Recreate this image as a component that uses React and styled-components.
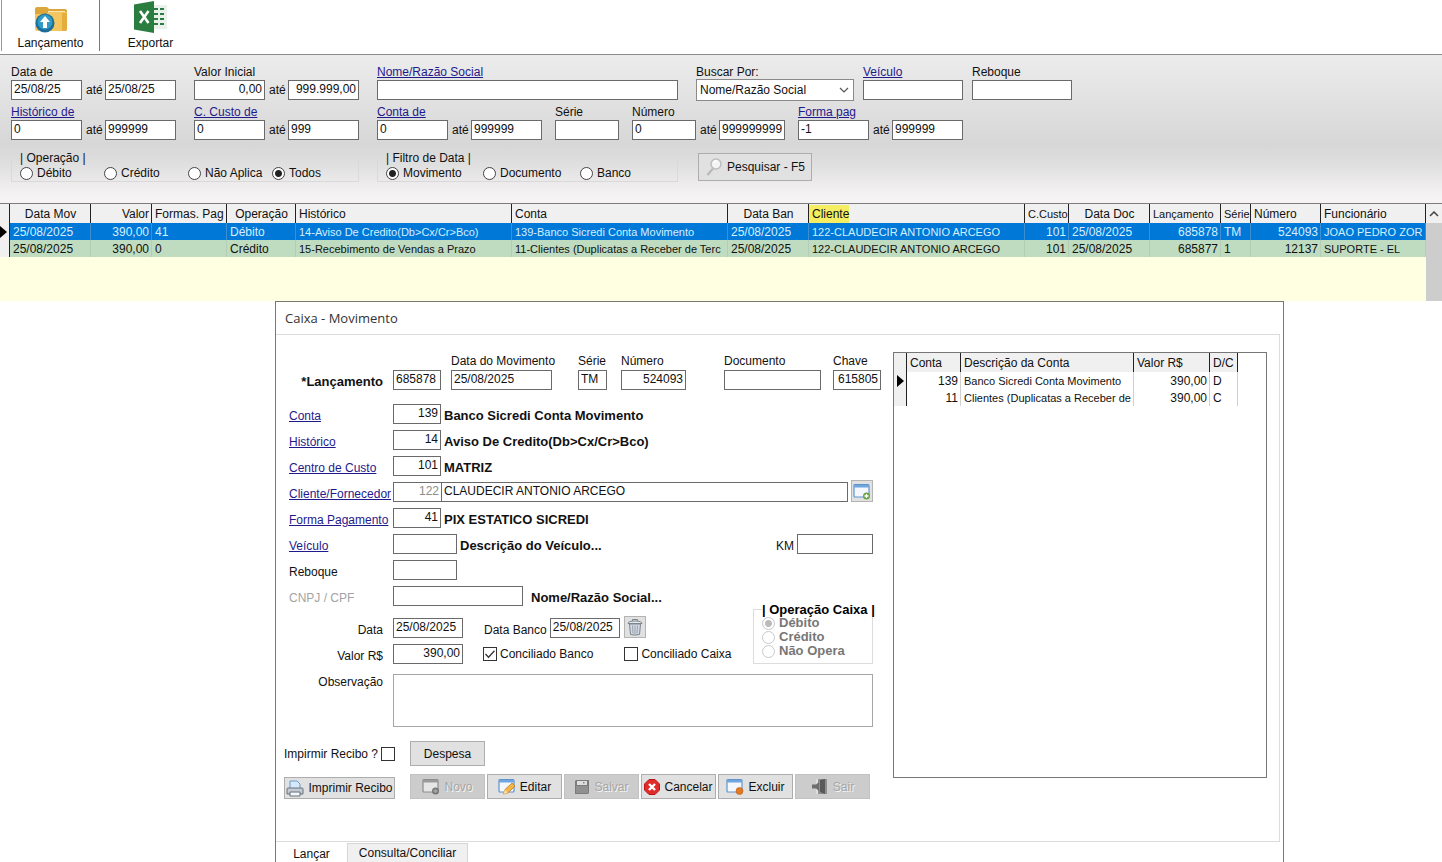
import React, { useId } from "react";
import styled, { createGlobalStyle, css } from "styled-components";

const GlobalStyle = createGlobalStyle`
  * {
    box-sizing: border-box;
  }
  body {
    margin: 0;
    background: #fff;
  }
  body, input, button, select, textarea {
    font-family: "Liberation Sans", Arial, sans-serif;
    font-size: 12px;
    line-height: 16px;
    color: #111;
  }
  a {
    color: #1f1a8c;
    white-space: nowrap;
  }
`;

/* ---------- shared controls ---------- */

const Page = styled.div`
  display: flex;
  flex-direction: column;
  height: 100vh;
  overflow: hidden;
`;

const TextInput = styled.input`
  width: ${({ $w }) => ($w ? `${$w}px` : "100%")};
  height: 20px;
  flex: none;
  padding: 0 2px 2px;
  border: 1px solid #6a6a6a;
  border-radius: 0;
  background: #fff;
  text-align: ${({ $right }) => ($right ? "right" : "left")};
  outline: none;
  &:disabled {
    color: #8c8c8c;
  }
`;

const Radio = styled.input.attrs({ type: "radio" })`
  appearance: none;
  width: 13px;
  height: 13px;
  flex: none;
  margin: 0;
  border: 1px solid #444;
  border-radius: 50%;
  background: #fff;
  &:checked {
    background: radial-gradient(circle, #222 0 3px, #fff 4px);
  }
  &:disabled {
    border-color: #c8c8c8;
  }
  &:disabled:checked {
    background: radial-gradient(circle, #bbb 0 3px, #fff 4px);
  }
`;

const CheckBox = styled.span`
  display: grid;
  width: 14px;
  height: 14px;
  flex: none;
  input,
  svg {
    grid-area: 1 / 1;
    width: 14px;
    height: 14px;
    margin: 0;
  }
  input {
    appearance: none;
    border: 1px solid #333;
    background: #fff;
  }
  svg {
    visibility: hidden;
    pointer-events: none;
  }
  input:checked + svg {
    visibility: visible;
  }
`;

const Check = ({ id, defaultChecked }) => (
  <CheckBox>
    <input type="checkbox" id={id} defaultChecked={defaultChecked} />
    <svg viewBox="0 0 14 14" fill="none" stroke="#333" strokeWidth="1.3">
      <path d="M2.5 7l3 3.2 6-6.4" />
    </svg>
  </CheckBox>
);

const Button = styled.button`
  display: flex;
  align-items: center;
  justify-content: center;
  gap: 4px;
  height: ${({ $h }) => $h || 25}px;
  width: ${({ $w }) => $w || 75}px;
  padding: 0;
  flex: none;
  white-space: nowrap;
  border: 1px solid #adadad;
  background: #e1e1e1;
  &:disabled {
    background: #ccc;
    border-color: #c2c2c2;
    color: #a6a6a6;
    text-shadow: 1px 1px #f4f4f4;
  }
`;

const IconButton = styled.button`
  display: grid;
  place-items: center;
  width: 22px;
  height: 22px;
  padding: 0;
  flex: none;
  border: 1px solid #b4b4b4;
  background: #e1e1e1;
`;

/* ---------- icons ---------- */

const FolderIcon = () => (
  <svg width="34" height="27" viewBox="0 0 34 27">
    <path d="M1 3q0-2 2-2h10l2 2h16q2 0 2 2v16H1z" fill="#dca63a" />
    <path d="M14 5h17v5H14z" fill="#f8e7b8" />
    <path d="M1 8h11l3-2h18v17q0 2-2 2H3q-2 0-2-2z" fill="#f3c660" />
    <path d="M28 7h5v16q0 2-2 2h-3z" fill="#e5ad3e" />
    <circle cx="11" cy="17" r="9.5" fill="#1d6c99" />
    <circle cx="11" cy="16" r="7.5" fill="#2f9bc6" />
    <path d="M11 10l5 6h-3v6H9v-6H6z" fill="#fff" />
  </svg>
);

const ExcelIcon = () => (
  <svg width="34" height="32" viewBox="0 0 34 32">
    <path d="M18 4h15v24H18z" fill="#e9f1ea" />
    <path
      d="M20 8h4M26 8h4M20 13h4M26 13h4M20 18h4M26 18h4M20 23h4M26 23h4"
      stroke="#2c7a43"
      strokeWidth="2.2"
    />
    <path d="M0 3.5L20 0v32L0 28.5z" fill="#2a7c3f" />
    <path d="M6 10l8.5 12M14.5 10L6 22" stroke="#fff" strokeWidth="2.6" />
  </svg>
);

const SearchIcon = () => (
  <svg width="18" height="20" viewBox="0 0 18 20" fill="none">
    <path d="M8 11.5L2.500 18" stroke="#b9b9b9" strokeWidth="2.2" />
    <circle cx="11" cy="7" r="5" fill="#f4f4f4" stroke="#bdbdbd" strokeWidth="1.5" />
    <path d="M8.5 6q1-2.200 3.200-2" stroke="#fff" strokeWidth="1.3" />
  </svg>
);

const TrashIcon = () => (
  <svg width="16" height="18" viewBox="0 0 16 18" fill="none">
    <path d="M2.500 6h11L12.500 16.500q-4.500 1.200-9 0z" fill="#d3dae4" stroke="#7d858f" />
    <path d="M5.500 7.500l.5 8M8 7.500v8.500M10.500 7.500l-.5 8" stroke="#98a1ae" />
    <path d="M1 5.500q0-2.500 7-2.500t7 2.500z" fill="#e4e8ee" stroke="#7d858f" />
    <path d="M5.500 3V1.500h5V3" stroke="#7d858f" />
  </svg>
);

const WindowIcon = ({ gray, badge }) => (
  <svg width="18" height="17" viewBox="0 0 18 17">
    <rect
      x="1"
      y="1.5"
      width="15"
      height="12.5"
      rx="1"
      fill={gray ? "#e6e6e6" : "#f4f8fd"}
      stroke={gray ? "#8d8d8d" : "#5f93cc"}
      strokeWidth="1.2"
    />
    <path d="M1 2h15v2.500H1z" fill={gray ? "#9a9a9a" : "#71a5de"} />
    {badge === "plus" && (
      <g>
        <circle cx="13.5" cy="13" r="3.5" fill={gray ? "#777" : "#6aa543"} />
        <path d="M13.500 11v4M11.500 13h4" stroke={gray ? "#aaa" : "#fff"} strokeWidth="1.3" />
      </g>
    )}
    {badge === "minus" && <circle cx="13.5" cy="13" r="3.5" fill="#e07a22" stroke="#bd5d12" strokeWidth=".6" />}
    {badge === "pencil" && (
      <g>
        <path d="M5.500 16l1.500-4.500L14 5l3 3-7 7z" fill="#f3b545" stroke="#c07d20" strokeWidth=".8" />
        <path d="M5.500 16l1.500-4.500 3 3.500z" fill="#f7dcae" />
      </g>
    )}
  </svg>
);

const SaveIcon = () => (
  <svg width="16" height="16" viewBox="0 0 16 16">
    <path d="M1 2l1-1h13v13l-1 1H1z" fill="#7b7b7b" />
    <path d="M3 2h10v4H3z" fill="#dedede" />
    <path d="M2 7h12v7H2z" fill="#909090" />
    <path d="M9 3h1.500v1.500H9z" fill="#888" />
  </svg>
);

const CancelIcon = () => (
  <svg width="16" height="16" viewBox="0 0 16 16">
    <path d="M5 .5h6L15.500 5v6L11 15.500H5L.5 11V5z" fill="#e02b2b" stroke="#b81818" />
    <path d="M5 5l6 6M11 5l-6 6" stroke="#fff" strokeWidth="2.4" />
  </svg>
);

const ExitIcon = () => (
  <svg width="18" height="17" viewBox="0 0 18 17">
    <path d="M5 1h11v15H5z" fill="#dedede" />
    <path d="M7 1h9v15H7z" fill="#8f8f8f" />
    <path d="M9 2l5-1v15l-5-2z" fill="#595959" />
    <path d="M8 4v9L5 10.500H1v-4h4z" fill="#6e6e6e" />
  </svg>
);

const PrinterIcon = () => (
  <svg width="18" height="17" viewBox="0 0 18 17">
    <path d="M4 1h7l3 3v6H4z" fill="#d6e9fa" stroke="#6b9bc9" />
    <path d="M1 9q0-1 1-1h14q1 0 1 1v5H1z" fill="#c3cad2" stroke="#66717d" />
    <path d="M4 12h10v4H4z" fill="#f3f7fa" stroke="#66717d" />
  </svg>
);

const Marker = () => (
  <svg width="7" height="12" viewBox="0 0 7 12">
    <path d="M0 0l7 6-7 6z" fill="#000" />
  </svg>
);

/* ---------- toolbar ---------- */

const Toolbar = styled.header`
  display: flex;
  height: 55px;
  flex: none;
  padding-left: 1px;
  border-bottom: 1px solid #8b8b8b;
`;

const ToolButton = styled.button`
  display: flex;
  flex-direction: column;
  align-items: center;
  justify-content: flex-end;
  width: 98px;
  height: 51px;
  padding: 0;
  border: 0;
  background: none;
  & + & {
    width: 102px;
    border-left: 1px solid #777;
  }
  &:first-child {
    border-left: 1px solid #999;
  }
  svg {
    margin-bottom: 2px;
  }
`;

/* ---------- filters ---------- */

const Filters = styled.section`
  display: flex;
  gap: 18px;
  flex: none;
  height: 148px;
  padding: 9px 11px 0;
  background: linear-gradient(#ececec, #d7d7d7 60%, #dcdcdc 70%, #f6f3f4 96%);
`;

const FilterColumn = styled.div`
  display: flex;
  flex-direction: column;
  gap: 4px;
`;

const FilterRow = styled.div`
  display: flex;
  gap: ${({ $gap }) => $gap}px;
`;

const FieldBox = styled.div`
  display: flex;
  flex-direction: column;
  align-items: flex-start;
  height: 36px;
  white-space: nowrap;
`;

const Pair = styled.div`
  display: flex;
  gap: 4px;
  align-items: center;
  > span {
    width: 15px;
  }
`;

const SelectBox = styled.div`
  position: relative;
  width: 158px;
  margin-top: -1px;
  select {
    appearance: none;
    width: 100%;
    height: 22px;
    padding: 0 20px 1px 3px;
    border: 1px solid #8a8a8a;
    border-radius: 0;
    background: #fff;
  }
  svg {
    position: absolute;
    right: 5px;
    top: 8px;
    pointer-events: none;
  }
`;

const Group = styled.fieldset`
  display: flex;
  height: 32px;
  min-width: 0;
  width: ${({ $w }) => $w}px;
  margin: 6px 0 0;
  padding: 0 8px;
  border: 1px solid #d9d9d9;
  border-top-color: transparent;
  legend {
    padding: 0;
    height: 16px;
  }
`;

const RadioRow = styled.div`
  display: flex;
  label {
    display: flex;
    align-items: center;
    gap: 4px;
    height: 14px;
    width: ${({ $w }) => $w}px;
    white-space: nowrap;
  }
`;

function Field({ label, link, w, right, value, to, toW }) {
  const id = useId();
  return (
    <FieldBox>
      {link ? <a href="#filtro">{label}</a> : <label htmlFor={id}>{label}</label>}
      <Pair>
        <TextInput id={id} aria-label={link ? label : undefined} $w={w} $right={right} defaultValue={value} />
        {to !== undefined && (
          <>
            <span>até</span>
            <TextInput aria-label={`${label} até`} $w={toW || w} $right={right} defaultValue={to} />
          </>
        )}
      </Pair>
    </FieldBox>
  );
}

function RadioGroup({ title, name, w, itemW, options, checked }) {
  return (
    <Group $w={w}>
      <legend>{title}</legend>
      <RadioRow $w={itemW}>
        {options.map((o) => (
          <label key={o}>
            <Radio name={name} defaultChecked={o === checked} />
            {o}
          </label>
        ))}
      </RadioRow>
    </Group>
  );
}

const SearchButton = styled(Button)`
  margin-top: 9px;
`;

function FilterBar() {
  return (
    <Filters>
      <FilterColumn>
        <FilterRow $gap={18}>
          <Field label="Data de" w={71} value="25/08/25" to="25/08/25" />
          <Field label="Valor Inicial" w={71} right value="0,00" to="999.999,00" />
        </FilterRow>
        <FilterRow $gap={18}>
          <Field label="Histórico de" link w={71} value="0" to="999999" />
          <Field label="C. Custo de" link w={71} value="0" to="999" />
        </FilterRow>
        <RadioGroup
          title="| Operação |"
          name="operacao"
          w={348}
          itemW={84}
          options={["Débito", "Crédito", "Não Aplica", "Todos"]}
          checked="Todos"
        />
      </FilterColumn>
      <FilterColumn>
        <FilterRow $gap={18}>
          <Field label="Nome/Razão Social" link w={301} value="" />
          <FilterRow $gap={9}>
            <FieldBox>
              <label htmlFor="buscar">Buscar Por:</label>
              <SelectBox>
                <select id="buscar" defaultValue="nome">
                  <option value="nome">Nome/Razão Social</option>
                </select>
                <svg width="10" height="6" viewBox="0 0 10 6" fill="none" stroke="#555" strokeWidth="1.2">
                  <path d="M1 1l4 4 4-4" />
                </svg>
              </SelectBox>
            </FieldBox>
            <Field label="Veículo" link w={100} value="" />
            <Field label="Reboque" w={100} value="" />
          </FilterRow>
        </FilterRow>
        <FilterRow $gap={13}>
          <Field label="Conta de" link w={71} value="0" to="999999" />
          <Field label="Série" w={64} value="" />
          <Field label="Número" w={64} value="0" to="999999999" toW={66} />
          <Field label="Forma pag" link w={71} value="-1" to="999999" />
        </FilterRow>
        <FilterRow $gap={20}>
          <RadioGroup
            title="| Filtro de Data |"
            name="filtro"
            w={301}
            itemW={97}
            options={["Movimento", "Documento", "Banco"]}
            checked="Movimento"
          />
          <SearchButton $w={114} $h={28}>
            <SearchIcon />
            Pesquisar - F5
          </SearchButton>
        </FilterRow>
      </FilterColumn>
    </Filters>
  );
}

/* ---------- main grid ---------- */

const GridArea = styled.section`
  display: flex;
  flex: none;
  height: 98px;
  border-top: 1px solid #7d7d7d;
  background: #ffffe1;
`;

const GridView = styled.div`
  flex: 1;
  min-width: 0;
  overflow: hidden;
`;

const DataTable = styled.table`
  width: ${({ $w }) => $w || "100%"};
  table-layout: fixed;
  border-collapse: separate;
  border-spacing: 0;
  th,
  td {
    height: 17px;
    padding: 0 2px 0 3px;
    line-height: 16px;
    overflow: hidden;
    white-space: nowrap;
    font-weight: normal;
    border-right: 1px solid ${({ $line }) => $line};
  }
  th {
    height: 19px;
    background: #f0f0f0;
    border-right-color: #222;
  }
  th:first-child,
  td:first-child {
    padding: 0;
    background: #f0f0f0;
    border-right: 1px solid #222;
  }
  td:first-child svg {
    display: block;
    margin-left: ${({ $inset }) => $inset || 0}px;
  }
`;

const Col = styled.col`
  width: ${({ $w }) => ($w ? `${$w}px` : "auto")};
`;

const Head = styled.th`
  text-align: ${({ $align }) => $align || "left"};
  font-size: ${({ $compact }) => ($compact ? "11px" : "12px")};
  mark {
    margin-left: -3px;
    padding: 2px 0 2px 3px;
    background: #f6ee62;
    color: inherit;
  }
`;

const Cell = styled.td`
  text-align: ${({ $align }) => $align || "left"};
  font-size: ${({ $compact }) => ($compact ? "11px" : "12px")};
`;

const GridRow = styled.tr`
  ${Cell} {
    background: #c0dcc0;
    ${({ $selected }) =>
      $selected &&
      css`
        background: #0078d7;
        color: #d5efff;
        border-right-color: #3c8fd0;
      `}
  }
`;

const ScrollBar = styled.div`
  width: 16px;
  background: #cdcdcd;
  div {
    display: grid;
    place-items: center;
    height: 19px;
    background: #f0f0f0;
  }
`;

const columns = [
  { name: "Data Mov", w: 81, head: "center" },
  { name: "Valor", w: 61, head: "right", cell: "right" },
  { name: "Formas. Pag", w: 75 },
  { name: "Operação", w: 69, head: "center" },
  { name: "Histórico", w: 216, smallCell: true },
  { name: "Conta", w: 216, smallCell: true },
  { name: "Data Ban", w: 81, head: "center" },
  { name: "Cliente", w: 216, smallCell: true },
  { name: "C.Custo", w: 44, cell: "right", smallHead: true },
  { name: "Data Doc", w: 81, head: "center" },
  { name: "Lançamento", w: 71, cell: "right", smallHead: true },
  { name: "Série", w: 30, smallHead: true },
  { name: "Número", w: 70, cell: "right" },
  { name: "Funcionário", smallCell: true },
];

const rows = [
  [
    "25/08/2025", "390,00", "41", "Débito", "14-Aviso De Credito(Db>Cx/Cr>Bco)",
    "139-Banco Sicredi Conta Movimento", "25/08/2025", "122-CLAUDECIR ANTONIO ARCEGO",
    "101", "25/08/2025", "685878", "TM", "524093", "JOAO PEDRO ZOR",
  ],
  [
    "25/08/2025", "390,00", "0", "Crédito", "15-Recebimento de Vendas a Prazo",
    "11-Clientes (Duplicatas a Receber de Terc", "25/08/2025", "122-CLAUDECIR ANTONIO ARCEGO",
    "101", "25/08/2025", "685877", "1", "12137", "SUPORTE - EL",
  ],
];

function MovementGrid() {
  return (
    <GridArea>
      <GridView>
        <DataTable $line="#b4cdb6">
          <colgroup>
            <Col $w={10} />
            {columns.map(({ name, w }) => (
              <Col key={name} $w={w} />
            ))}
          </colgroup>
          <thead>
            <tr>
              <th />
              {columns.map(({ name, head, smallHead }) => (
                <Head key={name} $align={head} $compact={smallHead}>
                  {name === "Cliente" ? <mark>{name}</mark> : name}
                </Head>
              ))}
            </tr>
          </thead>
          <tbody>
            {rows.map((row, i) => (
              <GridRow key={row[10]} $selected={i === 0}>
                <td>{i === 0 && <Marker />}</td>
                {row.map((value, c) => (
                  <Cell key={columns[c].name} $align={columns[c].cell} $compact={columns[c].smallCell}>
                    {value}
                  </Cell>
                ))}
              </GridRow>
            ))}
          </tbody>
        </DataTable>
      </GridView>
      <ScrollBar>
        <div>
          <svg width="10" height="6" viewBox="0 0 10 6" fill="none" stroke="#444" strokeWidth="1.5">
            <path d="M1 5l4-4 4 4" />
          </svg>
        </div>
      </ScrollBar>
    </GridArea>
  );
}

/* ---------- movement window ---------- */

const Window = styled.main`
  display: flex;
  flex-direction: column;
  flex: 1;
  margin: 0 158px 0 275px;
  border: 1px solid #777;
  border-bottom: 0;
  background: #fff;
`;

const TitleBar = styled.h1`
  height: 32px;
  margin: 0;
  padding-left: 9px;
  font: 400 13px/32px "Open Sans", sans-serif;
  color: #333;
`;

const Body = styled.div`
  display: flex;
  gap: 12px;
  margin-right: 3px;
  padding: 17px 12px 42px 8px;
  border: 1px solid #dcdcdc;
  border-left: 0;
`;

const Form = styled.form`
  width: 597px;
  flex: none;
  padding-top: 1px;
`;

const Fields = styled.div`
  display: flex;
  flex-direction: column;
  padding-left: 5px;
  gap: 14px;
`;

const Rows = styled.div`
  display: flex;
  flex-direction: column;
  gap: 6px;
`;

const Line = styled.div`
  display: grid;
  grid-template-columns: 94px 1fr;
  column-gap: 10px;
  min-height: 20px;
  align-items: end;
`;

const Caption = styled.label`
  text-align: ${({ $right }) => ($right ? "right" : "left")};
  align-self: ${({ $top }) => ($top ? "start" : "auto")};
  color: ${({ $muted }) => ($muted ? "#a3a3a3" : "inherit")};
  white-space: nowrap;
`;

const Strong = styled.strong`
  font-size: 13px;
`;

const Controls = styled.div`
  display: flex;
  align-items: flex-end;
  gap: 3px;
  height: 20px;
  width: 480px;
  white-space: nowrap;
`;

const ClientControls = styled(Controls)`
  gap: 0;
  > input + input {
    margin-left: -1px;
  }
  > button {
    margin-left: 3px;
  }
`;

const HeadFields = styled.div`
  display: grid;
  grid-template-columns: 58px 127px 43px 103px 109px 48px;
  align-items: end;
  > div {
    height: 37px;
    gap: 1px;
  }
`;

const Spacer = styled.span`
  flex: 1;
`;

const Observation = styled.textarea`
  display: block;
  width: 480px;
  height: 53px;
  border: 1px solid #a6a6a6;
  border-radius: 0;
  resize: none;
`;

const CashLine = styled.div`
  display: flex;
  justify-content: space-between;
  align-items: flex-end;
  width: 584px;
`;

const CashGroup = styled.fieldset`
  width: 120px;
  height: 61px;
  min-width: 0;
  margin: 0;
  padding: 0 0 0 8px;
  border: 1px solid #dcdcdc;
  color: #777;
  font-size: 13px;
  font-weight: bold;
  white-space: nowrap;
  legend {
    padding: 0;
    height: 13px;
    line-height: 13px;
    font-size: 13px;
    color: #000;
  }
  label {
    display: flex;
    align-items: center;
    gap: 4px;
    height: 14px;
  }
`;

const CompanyLine = styled(Controls)`
  width: 346px;
  gap: 8px;
`;

const PaymentRows = styled(Rows)`
  margin-top: 6px;
`;

const DateLine = styled(Controls)`
  width: 346px;
  input + label {
    margin-left: 18px;
  }
  > button {
    margin-left: 1px;
  }
`;

const CheckLine = styled(Controls)`
  align-items: center;
  width: 346px;
  > span {
    margin-left: 17px;
  }
  label + span {
    margin-left: 28px;
  }
`;

const ObservationLine = styled(Line)`
  margin-top: 10px;
  padding-left: 5px;
`;

const Actions = styled.div`
  display: grid;
  grid-template-columns: 111px 1fr;
  gap: 8px 15px;
  align-items: end;
  margin-top: 14px;
`;

const ReceiptOption = styled.div`
  display: flex;
  align-items: center;
  justify-content: space-between;
  height: 25px;
`;

const ButtonRow = styled.div`
  display: flex;
  gap: 2px;
`;

const AccountsPanel = styled.section`
  flex: 1;
  min-width: 0;
  height: 426px;
  border: 1px solid #777;
  overflow: hidden;
`;

const Tabs = styled.nav`
  display: flex;
  height: 20px;
`;

const Tab = styled.button`
  width: ${({ $w }) => $w}px;
  height: 19px;
  margin-top: 1px;
  padding: 0;
  border: 0;
  background: none;
  ${({ $active }) =>
    $active
      ? css`
          padding-top: 3px;
        `
      : css`
          border: 1px solid #d6d6d6;
          border-bottom: 0;
          background: #f0f0f0;
        `}
`;

const lookups = [
  { label: "Conta", value: "139", text: "Banco Sicredi Conta Movimento" },
  { label: "Histórico", value: "14", text: "Aviso De Credito(Db>Cx/Cr>Bco)" },
  { label: "Centro de Custo", value: "101", text: "MATRIZ" },
  { label: "Cliente/Fornecedor", value: "122", client: "CLAUDECIR ANTONIO ARCEGO" },
  { label: "Forma Pagamento", value: "41", text: "PIX ESTATICO SICREDI" },
];

const accounts = [
  ["139", "Banco Sicredi Conta Movimento", "390,00", "D"],
  ["11", "Clientes (Duplicatas a Receber de", "390,00", "C"],
];

function MovementForm() {
  return (
    <Form onSubmit={(e) => e.preventDefault()}>
      <Fields>
        <Line>
          <Caption $right htmlFor="lancamento">
            <Strong>*Lançamento</Strong>
          </Caption>
          <HeadFields>
            <TextInput id="lancamento" $w={48} defaultValue="685878" />
            <Field label="Data do Movimento" w={101} value="25/08/2025" />
            <Field label="Série" w={29} value="TM" />
            <Field label="Número" w={65} right value="524093" />
            <Field label="Documento" w={97} value="" />
            <Field label="Chave" w={48} right value="615805" />
          </HeadFields>
        </Line>
        <Rows>
          {lookups.map(({ label, value, text, client }) => (
            <Line key={label}>
              <a href="#busca">{label}</a>
              {client ? (
                <ClientControls>
                  <TextInput aria-label={label} $w={49} $right disabled defaultValue={value} />
                  <TextInput aria-label="Nome do cliente" $w={407} defaultValue={client} />
                  <IconButton aria-label="Novo cliente">
                    <WindowIcon badge="plus" />
                  </IconButton>
                </ClientControls>
              ) : (
                <Controls>
                  <TextInput aria-label={label} $w={48} $right defaultValue={value} />
                  <Strong>{text}</Strong>
                </Controls>
              )}
            </Line>
          ))}
          <Line>
            <a href="#busca">Veículo</a>
            <Controls>
              <TextInput aria-label="Veículo" $w={64} />
              <Strong>Descrição do Veículo...</Strong>
              <Spacer />
              <label htmlFor="km">KM</label>
              <TextInput id="km" $w={76} />
            </Controls>
          </Line>
          <Line>
            <Caption htmlFor="reboque">Reboque</Caption>
            <Controls>
              <TextInput id="reboque" $w={64} />
            </Controls>
          </Line>
          <CashLine>
            <Rows>
              <Line>
                <Caption $muted htmlFor="cnpj">CNPJ / CPF</Caption>
                <CompanyLine>
                  <TextInput id="cnpj" $w={130} />
                  <Strong>Nome/Razão Social...</Strong>
                </CompanyLine>
              </Line>
              <PaymentRows>
                <Line>
                  <Caption $right htmlFor="data">Data</Caption>
                  <DateLine>
                    <TextInput id="data" $w={70} defaultValue="25/08/2025" />
                    <label htmlFor="dataBanco">Data Banco</label>
                    <TextInput id="dataBanco" $w={70} defaultValue="25/08/2025" />
                    <IconButton aria-label="Limpar data">
                      <TrashIcon />
                    </IconButton>
                  </DateLine>
                </Line>
                <Line>
                  <Caption $right htmlFor="valor">Valor R$</Caption>
                  <CheckLine>
                    <TextInput id="valor" $w={70} $right defaultValue="390,00" />
                    <Check id="concBanco" defaultChecked />
                    <label htmlFor="concBanco">Conciliado Banco</label>
                    <Check id="concCaixa" />
                    <label htmlFor="concCaixa">Conciliado Caixa</label>
                  </CheckLine>
                </Line>
              </PaymentRows>
            </Rows>
            <CashGroup>
              <legend>| Operação Caixa |</legend>
              {["Débito", "Crédito", "Não Opera"].map((o, i) => (
                <label key={o}>
                  <Radio name="caixa" disabled defaultChecked={i === 0} />
                  {o}
                </label>
              ))}
            </CashGroup>
          </CashLine>
        </Rows>
      </Fields>
      <ObservationLine>
        <Caption $right $top htmlFor="obs">Observação</Caption>
        <Observation id="obs" />
      </ObservationLine>
      <Actions>
        <ReceiptOption>
          <label htmlFor="recibo">Impirmir Recibo ?</label>
          <Check id="recibo" />
        </ReceiptOption>
        <Button>Despesa</Button>
        <Button $w={111} $h={22}>
          <PrinterIcon />
          Imprimir Recibo
        </Button>
        <ButtonRow>
          <Button disabled><WindowIcon gray badge="plus" />Novo</Button>
          <Button><WindowIcon badge="pencil" />Editar</Button>
          <Button disabled><SaveIcon />Salvar</Button>
          <Button><CancelIcon />Cancelar</Button>
          <Button><WindowIcon badge="minus" />Excluir</Button>
          <Button disabled><ExitIcon />Sair</Button>
        </ButtonRow>
      </Actions>
    </Form>
  );
}

function AccountsTable() {
  return (
    <AccountsPanel>
      <DataTable $w="344px" $line="#d0d0d0" $inset={3}>
        <colgroup>
          <Col $w={13} />
          <Col $w={54} />
          <Col $w={173} />
          <Col $w={76} />
          <Col $w={28} />
        </colgroup>
        <thead>
          <tr>
            <th />
            <Head>Conta</Head>
            <Head>Descrição da Conta</Head>
            <Head>Valor R$</Head>
            <Head>D/C</Head>
          </tr>
        </thead>
        <tbody>
          {accounts.map(([code, name, value, type], i) => (
            <tr key={code}>
              <td>{i === 0 && <Marker />}</td>
              <Cell $align="right">{code}</Cell>
              <Cell $compact>{name}</Cell>
              <Cell $align="right">{value}</Cell>
              <Cell>{type}</Cell>
            </tr>
          ))}
        </tbody>
      </DataTable>
    </AccountsPanel>
  );
}

export default function App() {
  return (
    <Page>
      <GlobalStyle />
      <Toolbar>
        <ToolButton>
          <FolderIcon />
          Lançamento
        </ToolButton>
        <ToolButton>
          <ExcelIcon />
          Exportar
        </ToolButton>
      </Toolbar>
      <FilterBar />
      <MovementGrid />
      <Window>
        <TitleBar>Caixa - Movimento</TitleBar>
        <Body>
          <MovementForm />
          <AccountsTable />
        </Body>
        <Tabs>
          <Tab $active $w={71}>Lançar</Tab>
          <Tab $w={121}>Consulta/Conciliar</Tab>
        </Tabs>
      </Window>
    </Page>
  );
}
